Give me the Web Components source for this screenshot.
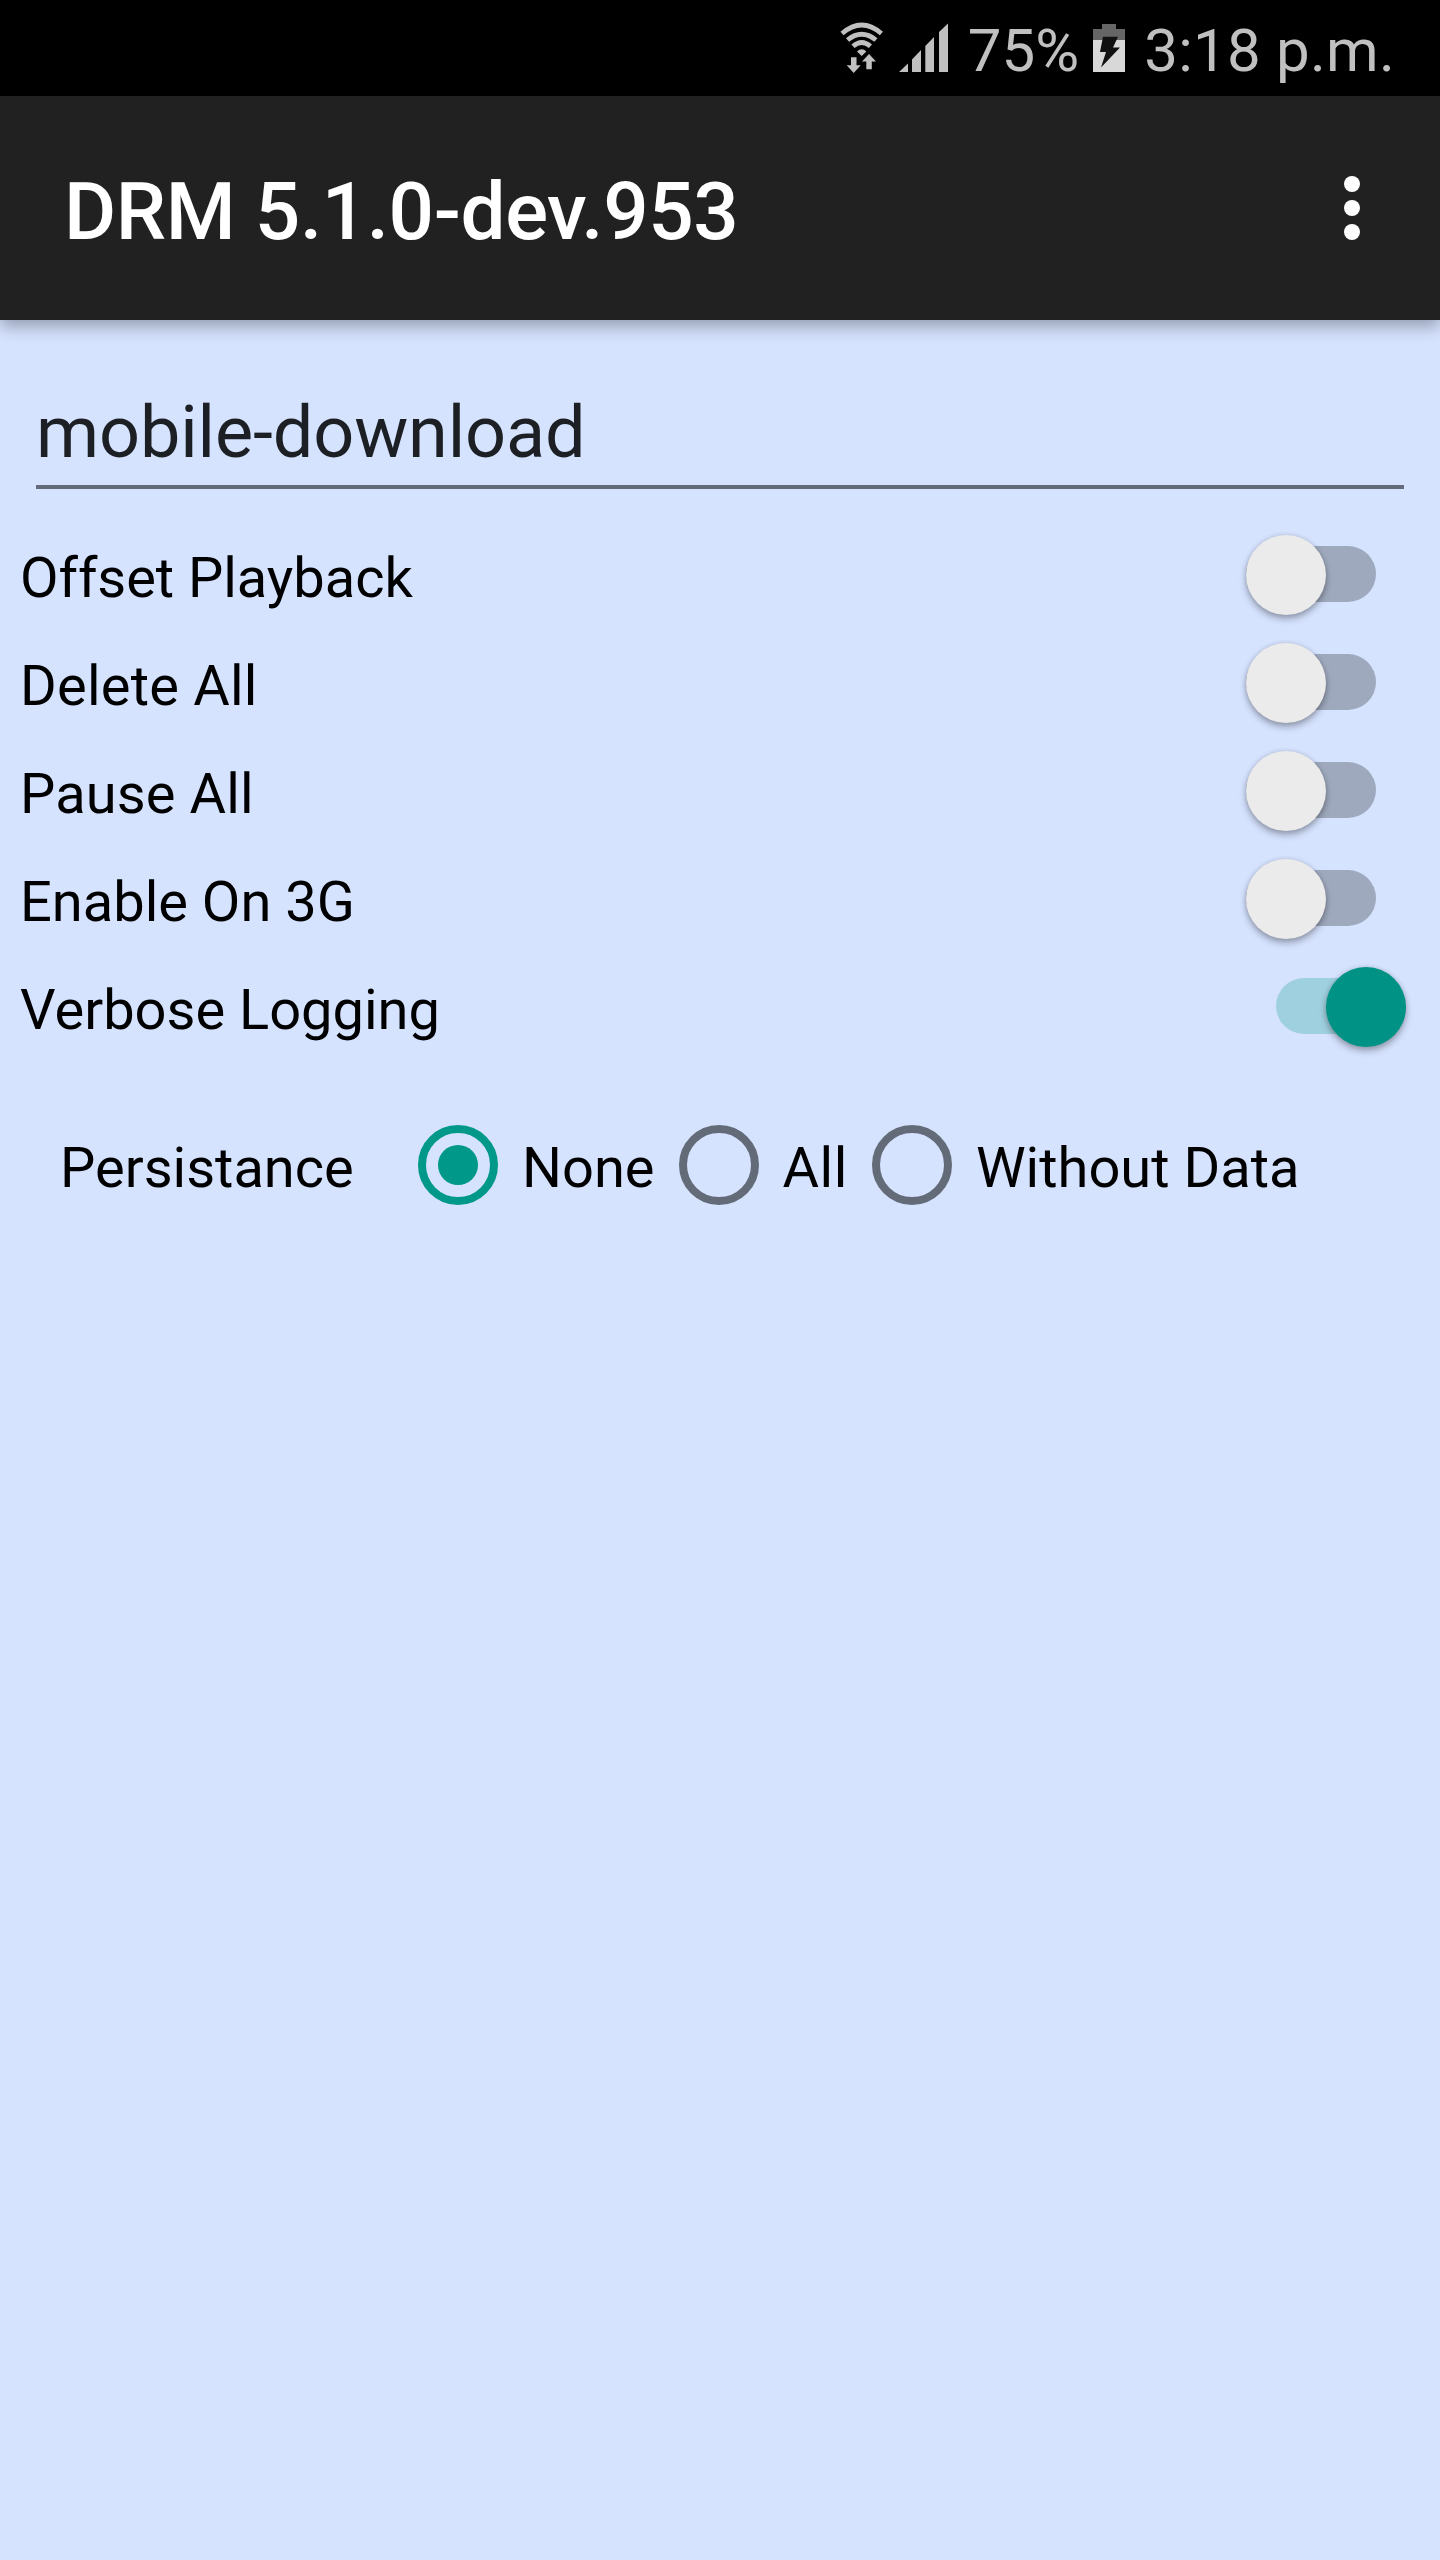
<!DOCTYPE html>
<html lang="en">
<head>
<meta charset="utf-8">
<title>DRM</title>
<style>
html,body{margin:0;padding:0}
body{font-family:Roboto,"Noto Sans",sans-serif;background:#d6e3ff;color:#000;width:1440px;min-height:2560px}
</style>
</head>
<body>
<drm-app></drm-app>
<script>
const define = (name, html) => customElements.define(name, class extends HTMLElement {
  constructor() {
    super();
    this.attachShadow({ mode: 'open' }).innerHTML = html;
  }
});

define('status-bar', `
<style>
:host{display:flex;height:96px;background:#000;color:#c0c0c0;font-size:60px;line-height:96px;justify-content:flex-end;padding-right:45px;box-sizing:border-box}
svg{display:block;flex:none}
.t{padding-top:4px;height:92px;line-height:93px;white-space:pre}
.pct{margin-left:20px;width:125px}
.time{margin-left:19.500px;letter-spacing:.25px}
</style>
<svg width="44" height="96" viewBox="840 0 44 96">
 <g fill="none" stroke="#c0c0c0" stroke-width="4.8">
  <path d="M842 33.500Q861.700 16.500 881.400 33.500"/>
  <path d="M847.500 40Q861.700 28.500 875.900 40"/>
  <path d="M853 46.300Q861.700 38.500 870.400 46.300"/>
 </g>
 <path fill="#c0c0c0" d="M857 51.500Q861.700 47 866.400 51.500L861.700 56ZM851 57.300H856.500V65.300H860.700L853.700 73L846.700 65.300H851ZM866.300 69.300H871.800V61.500H876L869 54L862 61.500H866.300Z"/>
</svg>
<svg width="50" height="96" viewBox="898 0 50 96" style="margin-left:14px"><path fill="#c0c0c0" d="M899 72L908 63.500V72ZM912 72V59.500L921 50V72ZM925.300 72V46L934 37V72ZM939 72V32L948 23.500V72Z"/></svg>
<span class="t pct">75%</span>
<svg width="32" height="96" viewBox="1092 0 32 96"><path fill="#666" d="M1092 40V29H1101V24H1115V29H1124V40Z"/><path fill="#d8d8d8" d="M1092 40H1124V72H1092Z"/><path fill="#111" d="M1102 36.700H1117L1112 47.500H1119L1100 67.500L1105 52H1099Z"/></svg>
<span class="t time">3:18 p.m.</span>`);

define('action-bar', `
<style>
:host{display:flex;position:relative;height:224px;box-sizing:border-box;background:#212121;color:#fff;padding:0 80px 0 64px;align-items:center;justify-content:space-between;box-shadow:0 6px 16px rgba(0,0,0,.32)}
h1{margin:0;padding-top:8px;font-size:80px;line-height:96px;font-weight:500;letter-spacing:-.4px}
svg{display:block}
</style>
<h1><slot></slot></h1>
<svg width="16" height="64" viewBox="0 0 16 64" fill="#fff"><circle cx="8" cy="8" r="8"/><circle cx="8" cy="32" r="8"/><circle cx="8" cy="56" r="8"/></svg>`);

define('text-field', `
<style>
:host{display:block;margin:0 36px;padding-top:65px;height:100px;border-bottom:4px solid #636b78;color:#1c1f23;font-size:72px;line-height:96px;letter-spacing:-.14px}
</style><slot></slot>`);

define('switch-row', `
<style>
:host{display:flex;height:108px;padding:0 34px 0 20px;align-items:center;justify-content:space-between;font-size:56px;line-height:64px;box-sizing:border-box}
span{padding-top:6px}
.sw{display:flex;align-items:center;width:130px;height:56px;border-radius:28px;background:#9fa9be;margin:0 30px 2px 0}
.sw i{width:80px;height:80px;flex:none;border-radius:50%;margin-top:2px;background:#ebebeb;box-shadow:0 4px 7px rgba(0,0,0,.3),0 0 5px rgba(0,0,0,.12)}
:host([on]) .sw{background:#9fd0df;margin-right:0}
:host([on]) i{background:#009385;margin-left:50px}
</style>
<span><slot></slot></span><div class="sw"><i></i></div>`);

define('radio-option', `
<style>
:host{display:flex;align-items:center}
i{box-sizing:border-box;width:80px;height:80px;margin:0 24px;border:8px solid #636b78;border-radius:50%;flex:none;display:flex;align-items:center;justify-content:center}
:host([checked]) i{border-color:#009888}
:host([checked]) i::after{content:"";width:40px;height:40px;border-radius:50%;background:#009888}
span{padding-top:6px}
</style>
<i></i><span><slot></slot></span>`);

define('drm-app', `
<style>
:host{display:block}
.list{padding-top:32px}
.persist{display:flex;align-items:center;height:128px;margin-top:40px;padding-left:60px;font-size:56px;line-height:64px;white-space:nowrap}
.persist>span{padding-top:6px;width:334px}
</style>
<status-bar></status-bar>
<action-bar>DRM 5.1.0-dev.953</action-bar>
<text-field>mobile-download</text-field>
<div class="list">
<switch-row style="letter-spacing:-.04px">Offset Playback</switch-row>
<switch-row style="letter-spacing:.22px">Delete All</switch-row>
<switch-row style="letter-spacing:.12px">Pause All</switch-row>
<switch-row>Enable On 3G</switch-row>
<switch-row on>Verbose Logging</switch-row>
</div>
<div class="persist"><span>Persistance</span><radio-option checked>None</radio-option><radio-option style="letter-spacing:.55px">All</radio-option><radio-option>Without Data</radio-option></div>`);
</script>
</body>
</html>
